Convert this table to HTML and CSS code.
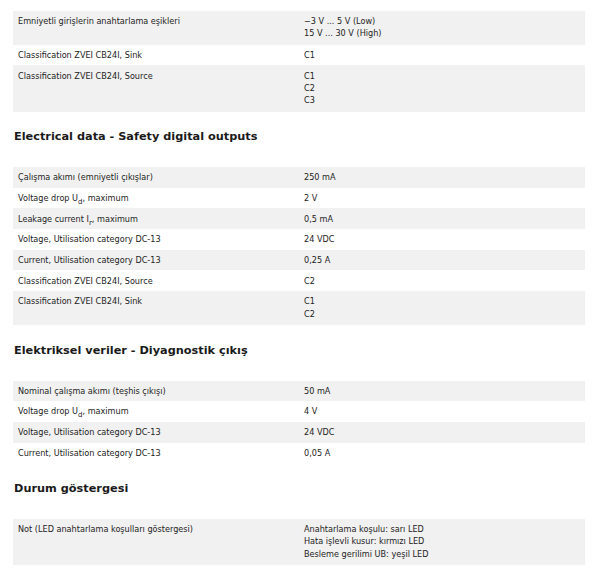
FILE: index.html
```html
<!DOCTYPE html>
<html lang="tr">
<head>
<meta charset="utf-8">
<link rel="stylesheet" href="styles.css">
</head>
<body>
<div class="page">
  <div class="table">
    <div class="row"><div class="cell">Emniyetli girişlerin anahtarlama eşikleri</div><div class="cell multi">−3 V ... 5 V (Low)<br>15 V ... 30 V (High)</div></div>
    <div class="row"><div class="cell">Classification ZVEI CB24I, Sink</div><div class="cell">C1</div></div>
    <div class="row"><div class="cell">Classification ZVEI CB24I, Source</div><div class="cell multi">C1<br>C2<br>C3</div></div>
  </div>

  <h2 class="heading">Electrical data - Safety digital outputs</h2>
  <div class="table">
    <div class="row"><div class="cell">Çalışma akımı (emniyetli çıkışlar)</div><div class="cell">250 mA</div></div>
    <div class="row"><div class="cell">Voltage drop U<sub>d</sub>, maximum</div><div class="cell">2 V</div></div>
    <div class="row"><div class="cell">Leakage current I<sub>r</sub>, maximum</div><div class="cell">0,5 mA</div></div>
    <div class="row"><div class="cell">Voltage, Utilisation category DC-13</div><div class="cell">24 VDC</div></div>
    <div class="row"><div class="cell">Current, Utilisation category DC-13</div><div class="cell">0,25 A</div></div>
    <div class="row"><div class="cell">Classification ZVEI CB24I, Source</div><div class="cell">C2</div></div>
    <div class="row"><div class="cell">Classification ZVEI CB24I, Sink</div><div class="cell multi">C1<br>C2</div></div>
  </div>

  <h2 class="heading">Elektriksel veriler - Diyagnostik çıkış</h2>
  <div class="table">
    <div class="row"><div class="cell">Nominal çalışma akımı (teşhis çıkışı)</div><div class="cell">50 mA</div></div>
    <div class="row"><div class="cell">Voltage drop U<sub>d</sub>, maximum</div><div class="cell">4 V</div></div>
    <div class="row"><div class="cell">Voltage, Utilisation category DC-13</div><div class="cell">24 VDC</div></div>
    <div class="row"><div class="cell">Current, Utilisation category DC-13</div><div class="cell">0,05 A</div></div>
  </div>

  <h2 class="heading">Durum göstergesi</h2>
  <div class="table">
    <div class="row"><div class="cell">Not (LED anahtarlama koşulları göstergesi)</div><div class="cell multi">Anahtarlama koşulu: sarı LED<br>Hata işlevli kusur: kırmızı LED<br>Besleme gerilimi UB: yeşil LED</div></div>
  </div>
</div>
</body>
</html>
```

FILE: styles.css
```css
html, body {
  margin: 0;
  padding: 0;
  background: #ffffff;
}

.page {
  width: 572px;
  padding: 11px 0 0 13px;
  font-family: "DejaVu Sans", Verdana, sans-serif;
  color: #222222;
}

.table {
  display: flex;
  flex-direction: column;
}

.row {
  display: grid;
  grid-template-columns: 286px 286px;
  font-size: 8.15px;
  line-height: 12.3px;
}

.row:nth-child(odd) {
  background: #f1f1f1;
}

.cell {
  padding: 4.2px 5px 4.2px 5px;
}

.cell.multi {
  padding-bottom: 5px;
}

.cell sub {
  font-size: 7px;
  line-height: 0;
  vertical-align: -3px;
}

.heading {
  margin: 17.6px 0 22px 1px;
  font-size: 11.3px;
  line-height: 16px;
  font-weight: bold;
  color: #1a1a1a;
}
```
